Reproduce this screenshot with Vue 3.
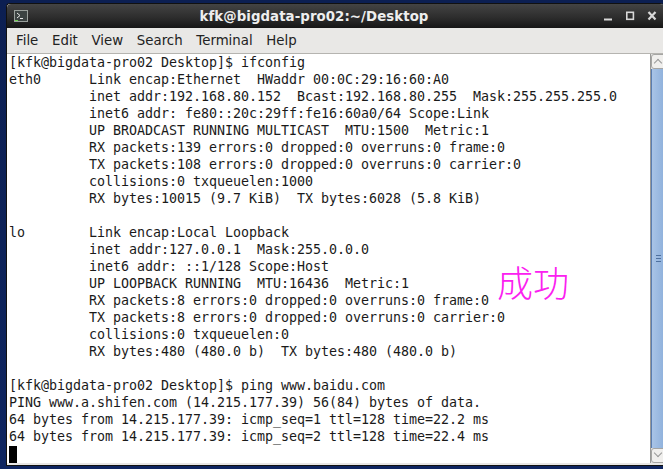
<script setup>
const menus = ['File', 'Edit', 'View', 'Search', 'Terminal', 'Help']
const output = `[kfk@bigdata-pro02 Desktop]$ ifconfig
eth0      Link encap:Ethernet  HWaddr 00:0C:29:16:60:A0
          inet addr:192.168.80.152  Bcast:192.168.80.255  Mask:255.255.255.0
          inet6 addr: fe80::20c:29ff:fe16:60a0/64 Scope:Link
          UP BROADCAST RUNNING MULTICAST  MTU:1500  Metric:1
          RX packets:139 errors:0 dropped:0 overruns:0 frame:0
          TX packets:108 errors:0 dropped:0 overruns:0 carrier:0
          collisions:0 txqueuelen:1000
          RX bytes:10015 (9.7 KiB)  TX bytes:6028 (5.8 KiB)

lo        Link encap:Local Loopback
          inet addr:127.0.0.1  Mask:255.0.0.0
          inet6 addr: ::1/128 Scope:Host
          UP LOOPBACK RUNNING  MTU:16436  Metric:1
          RX packets:8 errors:0 dropped:0 overruns:0 frame:0
          TX packets:8 errors:0 dropped:0 overruns:0 carrier:0
          collisions:0 txqueuelen:0
          RX bytes:480 (480.0 b)  TX bytes:480 (480.0 b)

[kfk@bigdata-pro02 Desktop]$ ping www.baidu.com
PING www.a.shifen.com (14.215.177.39) 56(84) bytes of data.
64 bytes from 14.215.177.39: icmp_seq=1 ttl=128 time=22.2 ms
64 bytes from 14.215.177.39: icmp_seq=2 ttl=128 time=22.4 ms`
const lines = output.split('\n')
</script>

<template>
  <div class="desktop">
    <div class="window">
      <header class="titlebar">
        <span class="app-icon">
          <svg width="14" height="12" viewBox="0 0 14 12">
            <rect x="0.5" y="0.5" width="13" height="11" fill="#3c4342" stroke="#9aa09c" />
            <path d="M3 3l3 2.5-3 2.5" fill="none" stroke="#e8e8e8" stroke-width="1" />
            <path d="M6 8.5h3" stroke="#e8e8e8" stroke-width="1" />
            <path d="M1 10.5h3" stroke="#6fd24a" stroke-width="1" />
          </svg>
        </span>
        <span class="title">kfk@bigdata-pro02:~/Desktop</span>
        <span class="controls">
          <svg width="60" height="14" viewBox="0 0 60 14">
            <path d="M0 10.5h8" stroke="#d8d8d8" stroke-width="2" />
            <rect x="22.8" y="3.3" width="6.6" height="7" fill="none" stroke="#d8d8d8" stroke-width="1.6" />
            <path d="M44.5 3l7 7.5M51.5 3l-7 7.5" stroke="#d8d8d8" stroke-width="2.2" />
          </svg>
        </span>
      </header>
      <nav class="menubar">
        <span v-for="m in menus" :key="m" class="menu">{{ m }}</span>
      </nav>
      <main class="body">
        <div class="terminal">
          <div v-for="(line, i) in lines" :key="i" class="line">{{ line }}</div>
          <span class="cursor"></span>
          <span class="note">成功</span>
        </div>
        <aside class="scrollbar">
          <span class="arrow up"></span>
          <span class="thumb"><i></i><i></i><i></i></span>
          <span class="arrow down"></span>
        </aside>
      </main>
    </div>
  </div>
</template>

<style>
html, body { margin: 0; overflow: hidden; }
</style>

<style scoped>
.desktop {
  width: 663px;
  height: 469px;
  box-sizing: border-box;
  padding: 3px 0 3px 6px;
  background: linear-gradient(#0c1f52, #0e2560);
  overflow: hidden;
}
.window {
  width: 658px;
  height: 463px;
  border-radius: 4px 4px 0 0;
  background: #e8e7e5;
  display: flex;
  flex-direction: column;
  border: 1px solid #111;
  border-right: 0;
  padding-bottom: 2px;
  box-sizing: border-box;
}
.titlebar {
  height: 24px;
  flex: none;
  display: flex;
  align-items: center;
  background: linear-gradient(#444444, #2b2b2b 60%, #161616);
  border-radius: 4px 4px 0 0;
  color: #eee;
}
.app-icon { margin-left: 7px; display: flex; }
.title {
  flex: 1;
  text-align: center;
  font: bold 13.33px "DejaVu Sans", sans-serif;
  letter-spacing: 0.07px;
  margin: 0 -2px 0 -6px;
}
.controls { display: flex; width: 60px; }
.menubar {
  height: 25px;
  flex: none;
  display: flex;
  align-items: center;
  gap: 13.7px;
  padding: 0 0 0 9px;
  background: #e9e8e6;
  border-bottom: 1px solid #b5b4b0;
  font: 13.33px "DejaVu Sans", sans-serif;
  color: #222;
}
.body {
  flex: 1;
  min-height: 0;
  display: flex;
  background: #fff;
}
.terminal {
  flex: 1;
  position: relative;
  padding-left: 2px;
  overflow: hidden;
  background: #fff;
}
.line {
  min-height: 17px;
  font: 13.33px/17px "DejaVu Sans Mono", monospace;
  letter-spacing: -0.025px;
  color: #1a1a1a;
  white-space: pre;
  width: fit-content;
}
.cursor {
  display: block;
  width: 8px;
  height: 17px;
  margin-top: 1px;
  background: #000;
}
.note {
  position: absolute;
  left: 490px;
  top: 209px;
  font: 300 36px/1 "Noto Sans CJK SC", sans-serif;
  color: #fb20f0;
}
.scrollbar {
  width: 13px;
  flex: none;
  display: flex;
  flex-direction: column;
  background: #e4e3e1;
  border-left: 1px solid #9a9a98;
}
.arrow {
  height: 15px;
  flex: none;
  background: #f0efed;
  border: 1px solid #a5a5a3;
  border-radius: 3px 0 0 3px;
  box-sizing: border-box;
  position: relative;
}
.arrow::after {
  content: "";
  position: absolute;
  left: 3px;
  width: 5px;
  height: 5px;
  border-left: 1px solid #999;
  border-top: 1px solid #999;
  transform: rotate(45deg);
  top: 5px;
}
.arrow.down::after { transform: rotate(225deg); top: 1px; }
.thumb {
  flex: 1;
  display: flex;
  flex-direction: column;
  justify-content: center;
  gap: 2px;
  align-items: center;
  background: linear-gradient(90deg, #a9c4e6, #8fb1dc);
  border-left: 1px solid #5a7db0;
}
.thumb i { width: 5px; height: 1px; background: #4f719f; }
</style>
